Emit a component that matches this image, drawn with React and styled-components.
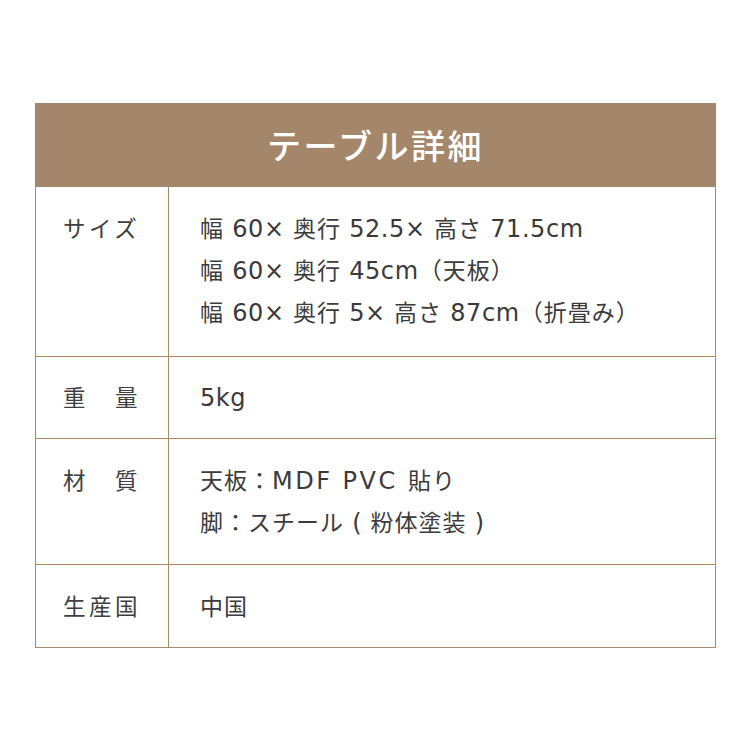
import React from "react";
import styled, { createGlobalStyle } from "styled-components";

const Global = createGlobalStyle`
  html, body { margin: 0; padding: 0; background: #ffffff; }
  body { font-family: "Noto Sans CJK JP", "Noto Sans", sans-serif; }
`;

const Page = styled.div`
  width: 750px;
  height: 750px;
  padding: 103px 0 0 35px;
  box-sizing: border-box;
`;

const Table = styled.div`
  width: 681px;
  box-sizing: border-box;
`;

const Header = styled.div`
  height: 84px;
  background: #a4876a;
  display: flex;
  align-items: center;
  justify-content: center;
  color: #ffffff;
  font-size: 34px;
  letter-spacing: 2.5px;
  font-weight: 500;
  padding-bottom: 2px;
  box-sizing: border-box;
`;

const Body = styled.div`
  border: 1px solid #a98b6c;
  border-top: none;
`;

const Row = styled.div`
  display: grid;
  grid-template-columns: 133px 1fr;
  border-top: ${(p) => (p.$first ? "none" : "1px solid #b08a62")};
`;

const Label = styled.div`
  border-right: 1px solid #a98b6c;
  padding: ${(p) => p.$pt}px 0 ${(p) => p.$pb}px 27px;
  font-size: 22.5px;
  line-height: 42px;
  letter-spacing: 3.5px;
  color: #404040;
  white-space: pre;
`;

const Value = styled.div`
  padding: ${(p) => p.$pt}px 0 ${(p) => p.$pb}px 31px;
  font-size: 23px;
  line-height: 42px;
  letter-spacing: 1px;
  color: #3c3c3c;
  display: flex;
  flex-direction: column;
`;

const Line = styled.div`
  height: 42px;
  white-space: pre;
  overflow: visible;
`;

const Latin = styled.span`
  font-family: "DejaVu Sans", "Noto Sans", sans-serif;
  font-size: 24px;
  line-height: 1;
  letter-spacing: ${(p) => (p.$caps ? "2.5px" : "0.6px")};
  color: #3a3a3a;
`;

function splitRuns(text) {
  const parts = text.split(/([\x20-\x7E×]+)/).filter((s) => s.length > 0);
  return parts.map((s, i) =>
    /^[\x20-\x7E×]+$/.test(s) ? (
      <Latin key={i} $caps={/[A-Z]/.test(s)}>
        {s}
      </Latin>
    ) : (
      <React.Fragment key={i}>{s}</React.Fragment>
    )
  );
}

const rows = [
  {
    label: "サイズ",
    pt: 19,
    pb: 24,
    lines: [
      "幅 60× 奥行 52.5× 高さ 71.5cm",
      "幅 60× 奥行 45cm（天板）",
      "幅 60× 奥行 5× 高さ 87cm（折畳み）",
    ],
  },
  { label: "重　量", pt: 18, pb: 21, lines: ["5kg"] },
  {
    label: "材　質",
    pt: 19,
    pb: 22,
    lines: ["天板：MDF PVC 貼り", "脚：スチール ( 粉体塗装 )"],
  },
  { label: "生産国", pt: 19, pb: 21, lines: ["中国"] },
];

export default function App() {
  return (
    <Page>
      <Global />
      <Table>
        <Header>テーブル詳細</Header>
        <Body>
          {rows.map((r, i) => (
            <Row key={r.label} $first={i === 0}>
              <Label $pt={r.pt} $pb={r.pb}>{r.label}</Label>
              <Value $pt={r.pt} $pb={r.pb}>
                {r.lines.map((l) => (
                  <Line key={l}>{splitRuns(l)}</Line>
                ))}
              </Value>
            </Row>
          ))}
        </Body>
      </Table>
    </Page>
  );
}
